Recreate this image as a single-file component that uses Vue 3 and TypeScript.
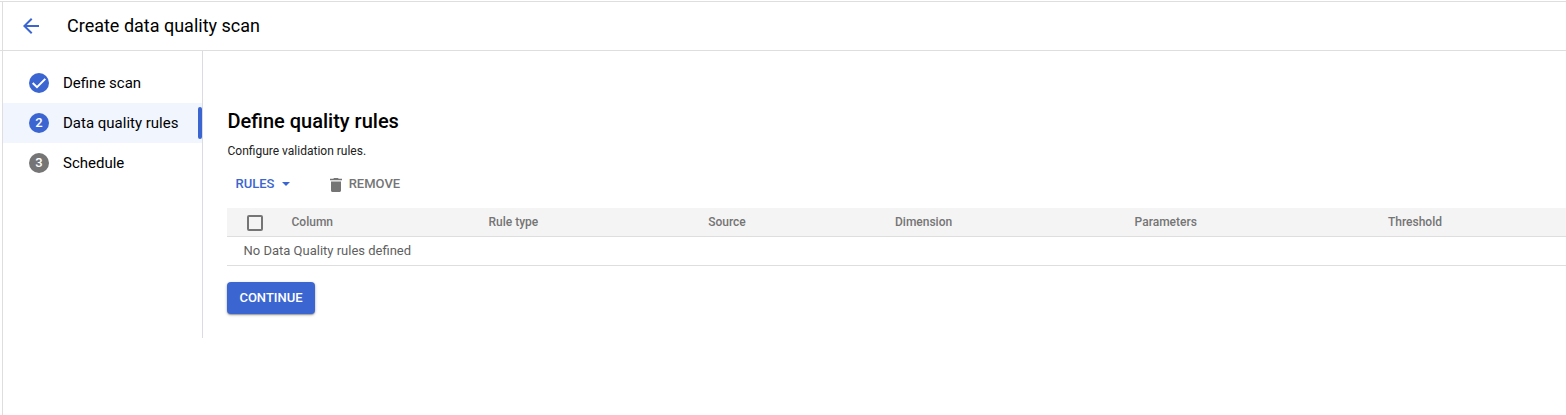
<script setup lang="ts">
interface Step {
  label: string
  state: 'done' | 'active' | 'pending'
}

const steps: Step[] = [
  { label: 'Define scan', state: 'done' },
  { label: 'Data quality rules', state: 'active' },
  { label: 'Schedule', state: 'pending' },
]

const columns: string[] = ['Column', 'Rule type', 'Source', 'Dimension', 'Parameters', 'Threshold']
</script>

<template>
  <div class="frame">
    <header class="header">
      <svg class="back" viewBox="0 0 16 16" width="16" height="16" aria-label="Back">
        <path d="M16 7H3.83l5.59-5.59L8 0 0 8l8 8 1.41-1.41L3.83 9H16z" fill="#3b66d1" />
      </svg>
      <h1 class="title">Create data quality scan</h1>
    </header>
    <div class="body">
      <nav class="steps">
        <div v-for="(step, i) in steps" :key="step.label" class="step" :class="step.state">
          <span class="badge">
            <svg v-if="step.state === 'done'" viewBox="0 0 20 20" width="20" height="20">
              <path d="M3.700 10l4.300 4.200 8.300-8.300" fill="none" stroke="#fff" stroke-width="2" />
            </svg>
            <span v-else>{{ i + 1 }}</span>
          </span>
          <span class="label">{{ step.label }}</span>
        </div>
      </nav>
      <main class="main">
        <h2 class="heading">Define quality rules</h2>
        <p class="desc">Configure validation rules.</p>
        <div class="toolbar">
          <button class="tool rules" type="button">
            <span>RULES</span>
            <svg viewBox="0 0 8 4" width="8" height="4"><path d="M0 0h8L4 4z" fill="#3b66d1" /></svg>
          </button>
          <button class="tool remove" type="button">
            <svg viewBox="0 0 12 14" width="12" height="14">
              <path d="M1 12.500C1 13.300 1.700 14 2.500 14h7c.8 0 1.500-.7 1.500-1.500V3.500H1zM12 .8H8.700L8 0H4l-.7.8H0v1.500h12z" fill="#757575" />
            </svg>
            <span>REMOVE</span>
          </button>
        </div>
        <div class="table">
          <div class="row head">
            <span class="check"><span class="box"></span></span>
            <span v-for="column in columns" :key="column">{{ column }}</span>
          </div>
          <div class="row empty">No Data Quality rules defined</div>
        </div>
        <button class="continue" type="button">CONTINUE</button>
      </main>
    </div>
  </div>
</template>

<style>
body {
  background: #fff;
  overflow: hidden;
}
</style>

<style scoped>
.frame {
  box-sizing: border-box;
  height: 414px;
  margin-top: 1px;
  border-top: 1px solid #dedede;
  font-family: Roboto, "Liberation Sans", sans-serif;
  color: #000;
  background: linear-gradient(#dedede, #dedede) 2px 0 / 1px 100% no-repeat #fff;
}
.header {
  display: flex;
  align-items: center;
  height: 48px;
  padding-left: 23px;
  border-bottom: 1px solid #dedede;
}
.back {
  display: block;
}
.title {
  margin: 0 0 0 28px;
  font-size: 18px;
  line-height: 24px;
  font-weight: 400;
}
.body {
  display: flex;
  align-items: flex-start;
  padding-left: 3px;
}
.steps {
  box-sizing: border-box;
  flex: none;
  width: 200px;
  height: 287px;
  padding-top: 12px;
  border-right: 1px solid #dadce0;
}
.step {
  display: flex;
  align-items: center;
  height: 40px;
  padding-left: 26px;
  font-size: 15px;
}
.step.active {
  background: #f0f5fe;
}
.step.active::after {
  content: "";
  width: 4px;
  height: 32px;
  margin-left: auto;
  border-radius: 2px;
  background: #3b66d1;
}
.badge {
  display: flex;
  align-items: center;
  justify-content: center;
  width: 20px;
  height: 20px;
  margin-right: 14px;
  border-radius: 50%;
  background: #3b66d1;
  color: #fff;
  font-size: 13px;
  line-height: 16px;
  font-weight: 500;
}
.pending .badge {
  background: #757575;
}
.main {
  flex: 1;
  min-width: 0;
  padding: 58px 0 0 24px;
}
.heading {
  margin: 0;
  padding-left: 0.5px;
  font-size: 20px;
  line-height: 24px;
  font-weight: 500;
}
.desc {
  margin: 10px 0 0;
  padding-left: 0.5px;
  font-size: 12px;
  line-height: 16px;
  color: #212121;
}
.toolbar {
  display: flex;
  height: 32px;
  margin: 9px 0 8px 8px;
}
.tool {
  display: flex;
  align-items: center;
  padding: 0;
  border: 0;
  background: none;
  font: 500 13px/16px Roboto, sans-serif;
}
.rules {
  gap: 7.5px;
  box-sizing: border-box;
  width: 95px;
  padding-left: 0.5px;
  color: #3b66d1;
}
.remove {
  gap: 6.7px;
  color: #757575;
}
.remove svg {
  margin-top: 2px;
}
.head {
  display: grid;
  grid-template-columns: 64.500px 197px 219.700px 186.800px 239.600px 253.400px 1fr;
  align-items: center;
  height: 28px;
  background: #f4f4f4;
  border-bottom: 1px solid #dedede;
  font-size: 12px;
  font-weight: 500;
  color: #757575;
}
.check {
  padding: 2px 0 0 20px;
}
.box {
  display: block;
  box-sizing: border-box;
  width: 16px;
  height: 16px;
  border: 2px solid #757575;
  border-radius: 2px;
}
.empty {
  height: 28px;
  padding-left: 16.5px;
  border-bottom: 1px solid #dedede;
  font-size: 13px;
  line-height: 28px;
  color: #5f5f5f;
}
.continue {
  display: block;
  width: 88px;
  height: 32px;
  margin-top: 16px;
  padding: 0;
  border: 0;
  border-radius: 4px;
  background: #3b66d1;
  color: #fff;
  font: 500 13px/32px Roboto, sans-serif;
  box-shadow: 0 1px 3px rgba(0, 0, 0, 0.3), 0 1px 1px rgba(0, 0, 0, 0.2);
}
</style>
